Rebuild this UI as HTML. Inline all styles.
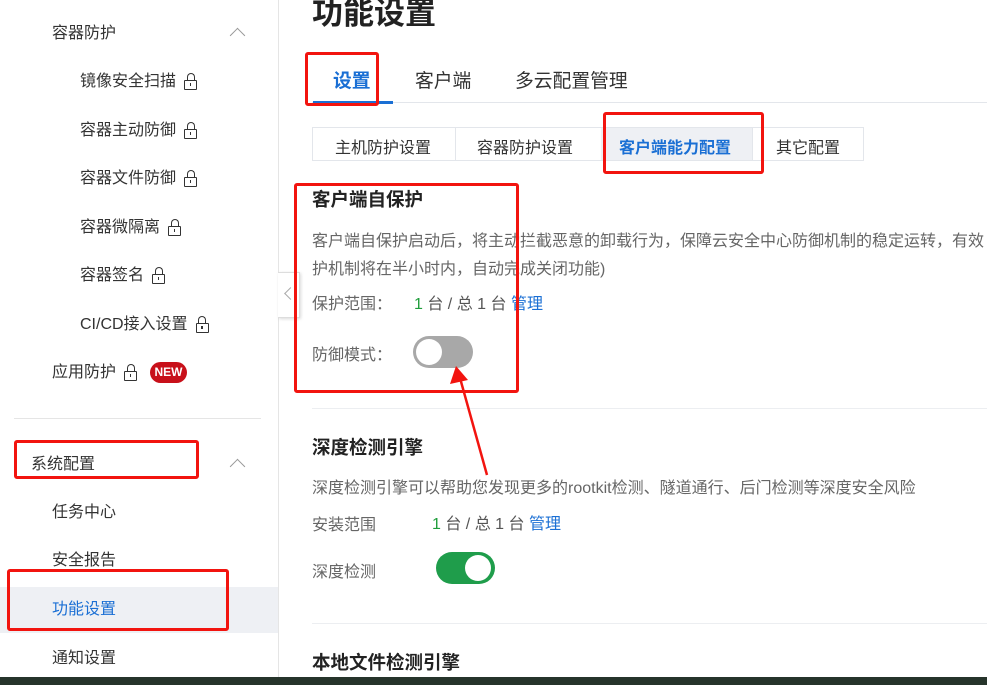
<!DOCTYPE html>
<html><head><meta charset="utf-8"><style>
*{margin:0;padding:0;box-sizing:border-box}
body{width:987px;height:685px;overflow:hidden;background:#fff;font-family:"Liberation Sans","Noto Sans CJK SC",sans-serif;position:relative;color:#333}
.a{position:absolute;white-space:nowrap}
.s{font-size:16px;color:#333;line-height:20px}
.lk{display:inline-block;width:13px;height:10px;border:1.6px solid #333;border-radius:1px;position:relative;margin-left:8px;vertical-align:-4px}
.lk:before{content:"";position:absolute;left:1.5px;top:-8px;width:6px;height:7px;border:1.6px solid #333;border-bottom:none;border-radius:4px 4px 0 0}
.lk:after{content:"";position:absolute;left:4.5px;top:2px;width:1.5px;height:3px;background:#333}
.chev{position:absolute;width:11px;height:11px;border-left:1.5px solid #999;border-top:1.5px solid #999;transform:rotate(45deg)}
.rb{position:absolute;border:3px solid #f2140f;border-radius:3px}
.g{color:#666;font-size:16px}
.h{font-weight:bold;font-size:18.5px;color:#222}
</style></head><body>
<div class="a" style="left:278px;top:0;width:1px;height:677px;background:#e5e5e5"></div>
<div class="a s" style="left:52px;top:24px">容器防护</div><div class="chev" style="left:232px;top:30px"></div>
<div class="a s" style="left:80px;top:72px">镜像安全扫描<span class="lk"></span></div>
<div class="a s" style="left:80px;top:121px">容器主动防御<span class="lk"></span></div>
<div class="a s" style="left:80px;top:169px">容器文件防御<span class="lk"></span></div>
<div class="a s" style="left:80px;top:218px">容器微隔离<span class="lk"></span></div>
<div class="a s" style="left:80px;top:266px">容器签名<span class="lk"></span></div>
<div class="a s" style="left:80px;top:315px">CI/CD接入设置<span class="lk"></span></div>
<div class="a s" style="left:52px;top:363px">应用防护<span class="lk"></span></div>
<div class="a" style="left:150px;top:362px;width:37px;height:21px;border-radius:11px;background:#c8101a;color:#fff;font-size:12px;font-weight:bold;text-align:center;line-height:21px">NEW</div>
<div class="a" style="left:14px;top:418px;width:247px;height:1px;background:#e5e5e5"></div>
<div class="a s" style="left:31px;top:455px">系统配置</div><div class="chev" style="left:232px;top:461px"></div>
<div class="a s" style="left:52px;top:503px">任务中心</div>
<div class="a s" style="left:52px;top:551px">安全报告</div>
<div class="a" style="left:0;top:587px;width:278px;height:46px;background:#eef0f4"></div>
<div class="a s" style="left:52px;top:600px;color:#1a6fd4">功能设置</div>
<div class="a s" style="left:52px;top:649px">通知设置</div>
<div class="rb" style="left:14px;top:440px;width:185px;height:39px"></div>
<div class="rb" style="left:7px;top:569px;width:222px;height:62px"></div>

<div class="a" style="left:278px;top:272px;width:22px;height:46px;background:#fff;border:1px solid #ddd;border-left:none;box-shadow:1px 1px 3px rgba(0,0,0,.15)"></div>
<div class="a" style="left:286px;top:289px;width:9px;height:9px;border-left:1.5px solid #aaa;border-bottom:1.5px solid #aaa;transform:rotate(45deg)"></div>

<div class="a" style="left:312px;top:-12px;font-size:31px;font-weight:bold;color:#222">功能设置</div>
<div class="a" style="left:312px;top:102px;width:675px;height:1px;background:#e3e6eb"></div>
<div class="a" style="left:313px;top:101px;width:80px;height:3px;background:#1a6fd4"></div>
<div class="a" style="left:333px;top:66px;font-size:18.8px;color:#1a6fd4;font-weight:bold">设置</div>
<div class="a" style="left:415px;top:66px;font-size:18.8px;color:#333">客户端</div>
<div class="a" style="left:515px;top:66px;font-size:18.8px;color:#333">多云配置管理</div>
<div class="rb" style="left:305px;top:52px;width:74px;height:54px"></div>

<div class="a" style="left:312px;top:127px;width:552px;height:34px;border:1px solid #e3e6eb"></div>
<div class="a" style="left:455px;top:127px;width:1px;height:34px;background:#e3e6eb"></div>
<div class="a" style="left:601px;top:128px;width:151px;height:32px;background:#eef0f4"></div>
<div class="a" style="left:752px;top:127px;width:1px;height:34px;background:#e3e6eb"></div>
<div class="a" style="left:335px;top:134px;font-size:16px">主机防护设置</div>
<div class="a" style="left:477px;top:134px;font-size:16px">容器防护设置</div>
<div class="a" style="left:619px;top:134px;font-size:16px;color:#1a6fd4;font-weight:bold">客户端能力配置</div>
<div class="a" style="left:776px;top:134px;font-size:16px">其它配置</div>
<div class="rb" style="left:603px;top:112px;width:161px;height:62px"></div>

<div class="a h" style="left:312px;top:186px">客户端自保护</div>
<div class="a g" style="left:312px;top:227px">客户端自保护启动后，将主动拦截恶意的卸载行为，保障云安全中心防御机制的稳定运转，有效</div>
<div class="a g" style="left:312px;top:255px">护机制将在半小时内，自动完成关闭功能)</div>
<div class="a g" style="left:312px;top:290px">保护范围：</div>
<div class="a" style="left:414px;top:290px;font-size:16px;color:#555"><span style="color:#1f9d3b">1</span> 台 / 总 1 台 <span style="color:#1a6fd4">管理</span></div>
<div class="a g" style="left:312px;top:341px">防御模式：</div>
<div class="a" style="left:413px;top:336px;width:60px;height:32px;border-radius:16px;background:#a8a8a8"></div>
<div class="a" style="left:416px;top:339px;width:26px;height:26px;border-radius:13px;background:#fff"></div>
<div class="rb" style="left:294px;top:183px;width:225px;height:210px"></div>

<div class="a" style="left:312px;top:408px;width:675px;height:1px;background:#eceef1"></div>
<div class="a h" style="left:312px;top:434px">深度检测引擎</div>
<div class="a g" style="left:312px;top:474px">深度检测引擎可以帮助您发现更多的rootkit检测、隧道通行、后门检测等深度安全风险</div>
<div class="a g" style="left:312px;top:511px">安装范围</div>
<div class="a" style="left:432px;top:510px;font-size:16px;color:#555"><span style="color:#1f9d3b">1</span> 台 / 总 1 台 <span style="color:#1a6fd4">管理</span></div>
<div class="a g" style="left:312px;top:558px">深度检测</div>
<div class="a" style="left:436px;top:552px;width:59px;height:32px;border-radius:16px;background:#1f9d4b"></div>
<div class="a" style="left:465px;top:555px;width:26px;height:26px;border-radius:13px;background:#fff"></div>
<div class="a" style="left:312px;top:623px;width:675px;height:1px;background:#eceef1"></div>
<div class="a h" style="left:312px;top:649px">本地文件检测引擎</div>

<svg class="a" style="left:0;top:0" width="987" height="685"><line x1="487" y1="475" x2="460" y2="378" stroke="#f2140f" stroke-width="2.5"/><polygon points="456,366 450,384 468,380" fill="#f2140f"/></svg>
<div class="a" style="left:0;top:677px;width:987px;height:8px;background:#26342b"></div>
</body></html>
